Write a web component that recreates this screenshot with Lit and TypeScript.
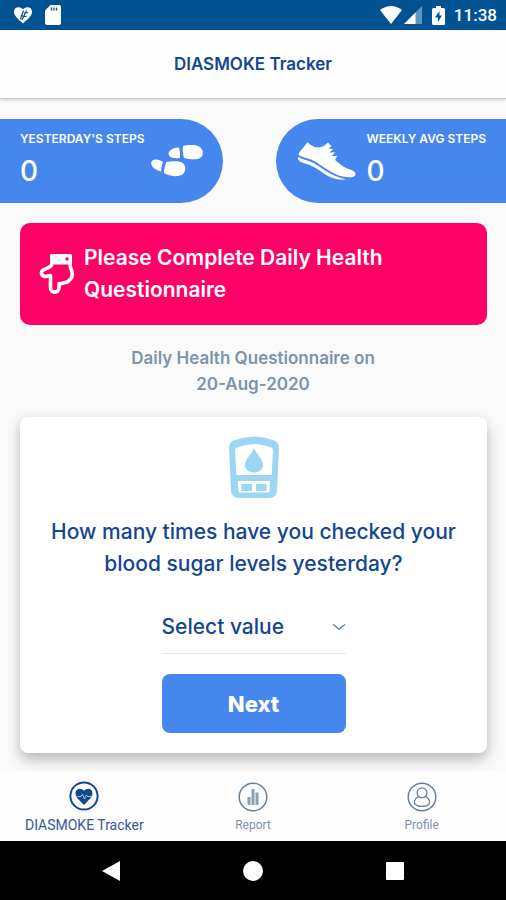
import { LitElement, html, css, svg } from "lit";
import { customElement, property, state } from "lit/decorators.js";
import { classMap } from "lit/directives/class-map.js";

const footprints = svg`
  <svg class="feet" viewBox="0 0 52 32" aria-hidden="true" fill="#fff">
    <path d="M32 1C37-.2 44-.6 48 1.500c5 3 5 9 1 11.500-4.500 2.500-11 1-16 0-1.300-4-1.500-8-1-12z"/>
    <path d="M28 2.500c1 3.500 1.200 7 1 10.500-4 .5-9 .5-11-2.500-2-4.500 4-8.500 10-8z"/>
    <path d="M15.500 17C20 16 27 15.500 31 17.500c4.500 3 4 9 .5 12-5.500 3-13 1.500-18.500-1.500 0-4 1-8 2.500-11z"/>
    <path d="M12 17c-1.300 3-1.800 6-1.800 9.500C6 25.500.5 22.500.2 18.500 0 13.500 8 13.500 12 17z"/>
  </svg>`;

const shoe = svg`
  <svg class="shoe" viewBox="0 0 60 40" aria-hidden="true">
    <path fill="#fff" d="M10.500 1c3 3.500 9.500 8 17 3.500L31 1.500l3.500 3.800-3.200 2.200 4.800.6-3.600 3.600 5.600-.6-3.300 4.200 5.500-.5-2.300 4.300c5.500 4.500 8.500 7.500 13.500 8.900 4.500 1.300 7.500 3 7 5.500-.5 3-7 3.500-13 2C33 32.500 25 24 16 19.500 11 17 5 16.500 1.500 13.800 2 10.500 7.500 6 10.500 1z"/>
    <path fill="#fff" d="M1 16c4 2.500 9.500 3 14.500 5.500C24 26 32 33.500 44 37c2 .7 3.500 1 5 1.300C40 40 32 36 25.500 31.500 18.500 26.500 15 24.500 8 22.500 3 21 .5 19.500 1 16z"/>
  </svg>`;

const hand = svg`
  <svg class="hand" viewBox="0 0 36 42" aria-hidden="true">
    <path fill="none" stroke="#fff" stroke-width="3.600" stroke-linejoin="round" d="M13 11C12 15 6.500 15.500 3.500 17.500 1.500 19.500 2.500 23 6 23.500c2 0 3.500-1 5.500-1V35c0 5.500 8.500 5.500 8.500 0v-4.500c2.500.8 4-.2 5.500-1 3 .3 4-1 5-2.500 3-2 3-5 2.500-8-.3-2-2-4-2-8"/>
    <rect x="11" y="1" width="22" height="10.500" rx="1.500" fill="#fff"/>
    <circle cx="28" cy="6" r="1.700" fill="#ff0066"/>
  </svg>`;

const glucometer = svg`
  <svg class="meter" viewBox="0 0 50 62" aria-hidden="true">
    <path fill="#9bd6f3" fill-rule="evenodd" d="M6 4Q25-3 44 4q6 2 6 8l-2 43q-.5 7-8 7H10q-7.500 0-8-7L0 12Q0 6 6 4zm2 7.500q-2 .5-2 2.500l1.300 25h35.400L44 14q0-2-2-2.500-17-7-34 0zM9 45l.5 10q0 1.500 1.500 1.500h28q1.500 0 1.500-1.500L41 45z"/>
    <path fill="#9bd6f3" d="M25 12c3 7 9 11 9 17 0 10-18 10-18 0 0-6 6-10 9-17zM12.500 48H23v7H12.500zM27 48h10.500v7H27z"/>
  </svg>`;

const trackerIcon = svg`
  <svg viewBox="0 0 30 30" aria-hidden="true">
    <circle cx="15" cy="15" r="13.600" fill="none" stroke="currentColor" stroke-width="2"/>
    <path fill="currentColor" d="M15 24C10 19 6.500 16 6.500 12 6.500 7.500 12 6 15 9.800 18 6 23.500 7.500 23.500 12c0 4-3.500 7-8.500 12z"/>
    <path fill="none" stroke="#a9c0dc" stroke-width="1" d="M8.500 15.500h3.500l1.500-2.500 2 5 2-4 1 1.500h3.500"/>
  </svg>`;

const reportIcon = svg`
  <svg viewBox="0 0 30 30" aria-hidden="true">
    <circle cx="15" cy="15" r="13.800" fill="none" stroke="currentColor" stroke-width="1.500"/>
    <path fill="currentColor" fill-opacity=".75" d="M9.500 15h3v8h-3zM13.500 7h3v16h-3zM17.500 10.500h3V23h-3z"/>
  </svg>`;

const profileIcon = svg`
  <svg viewBox="0 0 30 30" aria-hidden="true" fill="none" stroke="currentColor">
    <circle cx="15" cy="15" r="13.800" stroke-width="1.500"/>
    <circle cx="15" cy="10.800" r="4.900" stroke-width="1.300"/>
    <path stroke-width="1.300" d="M11.500 14.500C8 16.500 7 19 7.500 21.500c3 3.800 12 3.800 15 0 .5-2.500-.5-5-4-7"/>
  </svg>`;

@customElement("status-bar")
class StatusBar extends LitElement {
  static styles = css`
    :host {
      display: flex;
      align-items: center;
      justify-content: space-between;
      height: 30px;
      padding: 0 9px 0 14px;
      background: #015293;
      color: #fff;
      font: 500 18px/30px Roboto, sans-serif;
    }
    .group { display: flex; align-items: center; }
    .left { gap: 13px; }
    .heart { width: 18px; height: 18px; }
    .card { width: 16px; height: 20px; }
    .wifi { width: 22px; height: 18px; }
    .signal { width: 18px; height: 18px; margin: 0 10px 0 2px; }
    .battery { width: 13px; height: 19px; margin-right: 9px; }
    .group span { font-size: 17px; }
  `;
  render() {
    return html`
      <div class="group left">
        <svg class="heart" viewBox="0 0 18 18" aria-hidden="true">
          <path fill="#fff" d="M9 17.500C4 13 0 10 0 5.800 0 .5 6 0 9 3.200 12 0 18 .5 18 5.800c0 4.200-4 7.200-9 11.700z"/>
          <path fill="none" stroke="#015293" stroke-width="1.200" d="M6.500 13.500l3-9M8 14l4.500-9.500M6.500 10l6 .5M10 7l4-.5"/>
        </svg>
        <svg class="card" viewBox="0 0 16 20" aria-hidden="true">
          <path fill="#fff" d="M5.500 0H14q2 0 2 2v16q0 2-2 2H2q-2 0-2-2V5.500z"/>
          <path stroke="#015293" stroke-width="1.300" d="M6.500 2.500v3M9 2.500v3M11.500 2.500v3"/>
        </svg>
      </div>
      <div class="group">
        <svg class="wifi" viewBox="0 0 22 18" aria-hidden="true">
          <path fill="#fff" d="M0 4Q11-4 22 4L11 18z"/>
        </svg>
        <svg class="signal" viewBox="0 0 18 18" aria-hidden="true">
          <path fill="#5f94bf" d="M18 0v18H0z"/>
          <path fill="#fff" d="M11.500 6.500V18H0z"/>
        </svg>
        <svg class="battery" viewBox="0 0 13 19" aria-hidden="true">
          <path fill="#fff" d="M4 0h5v2h2.500Q13 2 13 3.500v14q0 1.500-1.500 1.500h-10Q0 19 0 17.500v-14Q0 2 1.500 2H4z"/>
          <path fill="#015293" d="M7.500 5L3 11.500h3V16l4-6.500H7.500z"/>
        </svg>
        <span>11:38</span>
      </div>
    `;
  }
}

@customElement("steps-pill")
class StepsPill extends LitElement {
  @property() label = "";
  @property({ type: Number }) value = 0;
  @property({ reflect: true }) side = "left";

  static styles = css`
    :host {
      box-sizing: border-box;
      display: flex;
      align-items: center;
      justify-content: space-between;
      height: 84px;
      padding: 0 20px;
      background: #4687ee;
      color: #fff;
    }
    :host([side="left"]) { width: 44%; border-radius: 0 42px 42px 0; }
    :host([side="right"]) {
      gap: 10px;
      justify-content: flex-end;
      min-width: 230px;
      border-radius: 42px 0 0 42px;
    }
    .text { display: flex; flex-direction: column; white-space: nowrap; }
    .label { font-size: 12px; font-weight: 600; line-height: 20px; }
    .value { font-size: 28px; font-weight: 500; line-height: 44px; }
    .feet { width: 52px; height: 32px; flex: none; }
    .shoe { width: 60px; height: 40px; flex: none; }
  `;
  render() {
    const text = html`<div class="text">
      <span class="label">${this.label}</span>
      <span class="value">${this.value}</span>
    </div>`;
    return this.side === "left" ? html`${text}${footprints}` : html`${shoe}${text}`;
  }
}

@customElement("app-root")
class AppRoot extends LitElement {
  @state() private tab = "DIASMOKE Tracker";

  static styles = css`
    :host {
      display: flex;
      flex-direction: column;
      min-height: 100vh;
      background: #fafafa;
      color: #134690;
      font-family: Inter, "Noto Sans", sans-serif;
    }
    * { box-sizing: border-box; }
    .header {
      padding: 20px;
      background: #fefefe;
      border-bottom: 1px solid #c8c8c8;
      box-shadow: 0 1px 3px rgba(0, 0, 0, 0.18);
      text-align: center;
    }
    .title { margin: 0; font-size: 17px; font-weight: 600; line-height: 28px; }
    .main { flex: 1; display: flex; flex-direction: column; padding: 20px 0 18px; overflow: hidden; }
    .steps { display: flex; justify-content: space-between; }
    .alert {
      display: flex;
      align-items: center;
      gap: 9px;
      margin: 20px 19px 0 20px;
      padding: 19px;
      border-radius: 10px;
      background: #ff0066;
      color: #fff;
      font-size: 21px;
      font-weight: 600;
      line-height: 32px;
    }
    .alert p { margin: 0; max-width: 320px; }
    .hand { width: 36px; height: 42px; flex: none; }
    .date {
      margin: 20px auto;
      color: #7c94ab;
      font-size: 17px;
      font-weight: 600;
      line-height: 26px;
      text-align: center;
    }
    .card {
      display: flex;
      flex-direction: column;
      align-items: center;
      margin: 0 19px 0 20px;
      padding: 19px 20px 20px;
      border-radius: 8px;
      background: #fff;
      box-shadow: 0 6px 14px rgba(0, 0, 0, 0.28);
    }
    .meter { width: 50px; height: 62px; }
    .question {
      margin: 18px 0 21px;
      font-size: 21px;
      font-weight: 500;
      line-height: 32px;
      text-align: center;
    }
    .field { display: grid; align-items: center; width: 184px; border-bottom: 1px solid #e6e9ec; }
    .field select, .field svg { grid-area: 1 / 1; }
    .field select {
      appearance: none;
      width: 100%;
      height: 52px;
      padding: 0;
      border: 0;
      background: transparent;
      color: inherit;
      font: 500 21px/32px Inter, "Noto Sans", sans-serif;
    }
    .field svg { justify-self: end; width: 14px; height: 8px; pointer-events: none; }
    .next {
      width: 184px;
      height: 59px;
      margin-top: 20px;
      padding: 0;
      border: 0;
      border-radius: 8px;
      background: #4687ee;
      color: #fff;
      font: 800 22px/32px Inter, "Noto Sans", sans-serif;
    }
    .tabs { display: flex; height: 70px; background: #fefefe; }
    .tab {
      flex: 1;
      display: flex;
      flex-direction: column;
      align-items: center;
      gap: 5px;
      padding: 11px 0 0;
      color: #7f90a5;
      font: 400 12px/16px Roboto, sans-serif;
      text-decoration: none;
    }
    .tab svg { width: 30px; height: 30px; color: #64809f; }
    .tab.active { gap: 6px; padding-top: 10px; color: #36569c; font-size: 14px; }
    .tab.active svg { color: #11498c; }
    .system {
      display: flex;
      height: 59px;
      background: #000;
      padding: 0 40px;
      align-items: center;
      justify-content: space-around;
    }
    .key { display: flex; padding: 0; border: 0; background: none; }
    .key svg { width: 20px; height: 20px; fill: #fff; }
  `;

  private tabLink(name: string, icon: unknown) {
    return html`<a
      href="#"
      class=${classMap({ tab: true, active: this.tab === name })}
      @click=${(e: Event) => { e.preventDefault(); this.tab = name; }}
    >${icon}<span>${name}</span></a>`;
  }

  render() {
    return html`
      <status-bar></status-bar>
      <header class="header"><h1 class="title">DIASMOKE Tracker</h1></header>
      <main class="main">
        <section class="steps">
          <steps-pill side="left" label="YESTERDAY'S STEPS" value="0"></steps-pill>
          <steps-pill side="right" label="WEEKLY AVG STEPS" value="0"></steps-pill>
        </section>
        <section class="alert">
          ${hand}
          <p>Please Complete Daily Health Questionnaire</p>
        </section>
        <div class="date">Daily Health Questionnaire on<br />20-Aug-2020</div>
        <form class="card" @submit=${(e: Event) => e.preventDefault()}>
          ${glucometer}
          <label class="question" for="count">How many times have you checked your<br />blood sugar levels yesterday?</label>
          <div class="field">
            <select id="count">
              <option>Select value</option>
              <option>0</option>
              <option>1</option>
              <option>2</option>
              <option>3</option>
            </select>
            <svg viewBox="0 0 14 8" aria-hidden="true">
              <path d="M1 1.500Q5 4 7 6.500 9 4 13 1.500" fill="none" stroke="#50779d" stroke-width="1.200"/>
            </svg>
          </div>
          <button class="next" type="submit">Next</button>
        </form>
      </main>
      <nav class="tabs">
        ${this.tabLink("DIASMOKE Tracker", trackerIcon)}
        ${this.tabLink("Report", reportIcon)}
        ${this.tabLink("Profile", profileIcon)}
      </nav>
      <div class="system">
        <button class="key" aria-label="Back"><svg viewBox="0 0 20 20"><path d="M19 0v20L1 10z"/></svg></button>
        <button class="key" aria-label="Home"><svg viewBox="0 0 20 20"><circle cx="10" cy="10" r="10"/></svg></button>
        <button class="key" aria-label="Recent apps"><svg viewBox="0 0 20 20"><rect x="1" y="1" width="18" height="18" rx="1"/></svg></button>
      </div>
    `;
  }
}
